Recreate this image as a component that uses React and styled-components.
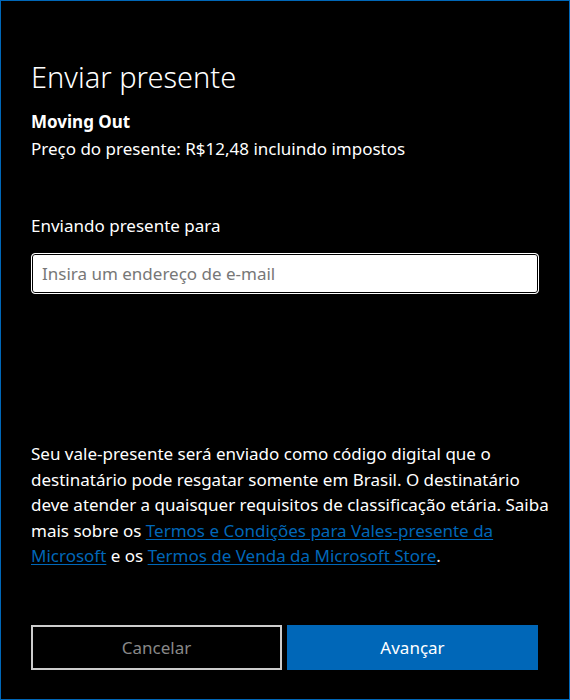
import React, { useState } from "react";
import styled, { createGlobalStyle } from "styled-components";

const GlobalStyle = createGlobalStyle`
  * { box-sizing: border-box; }
  body {
    margin: 0;
    background: #000;
    font-family: "Noto Sans", "Open Sans", sans-serif;
  }
`;

const App = () => {
  const [email, setEmail] = useState("");

  return (
    <StWindow>
      <GlobalStyle />
      <StTitle>Enviar presente</StTitle>

      <StHeader>
        <StProduct>Moving Out</StProduct>
        <StPrice>Preço do presente: R$12,48 incluindo impostos</StPrice>
      </StHeader>

      <StLabel htmlFor="giftEmail">Enviando presente para</StLabel>
      <StInput
        id="giftEmail"
        value={email}
        onChange={(e) => setEmail(e.target.value)}
        placeholder="Insira um endereço de e-mail"
      />

      <StNotice>
        Seu vale-presente será enviado como código digital que o destinatário
        pode resgatar somente em Brasil. O destinatário deve atender a
        quaisquer requisitos de classificação etária. Saiba mais sobre os{" "}
        <StLink href="#">Termos e Condições para Vales-presente da Microsoft</StLink>{" "}
        e os <StLink href="#">Termos de Venda da Microsoft Store</StLink>.
      </StNotice>

      <StActions>
        <StButton>Cancelar</StButton>
        <StButton primary>Avançar</StButton>
      </StActions>
    </StWindow>
  );
};

export default App;

const StWindow = styled.div`
  width: 570px;
  height: 700px;
  border: 1px solid #0067b8;
  background: #000;
  color: #fff;
  display: flex;
  flex-direction: column;
  padding: 58px 31px 29px 30px;
`;

const StTitle = styled.h1`
  margin: 0;
  font-size: 29px;
  font-weight: 300;
  line-height: 36px;
`;

const StHeader = styled.div`
  margin-top: 13px;
  display: flex;
  flex-direction: column;
  font-size: 17px;
  line-height: 27px;
`;

const StProduct = styled.div`
  font-weight: 700;
`;

const StPrice = styled.div`
  font-weight: 400;
`;

const StLabel = styled.label`
  margin-top: 51px;
  font-size: 17px;
  line-height: 26px;
`;

const StInput = styled.input`
  margin-top: 14px;
  width: 508px;
  height: 41px;
  border: 1px solid #fff;
  border-radius: 4px;
  box-shadow: inset 0 0 0 1px #000;
  background: #fff;
  padding: 0 10px;
  font-family: inherit;
  font-size: 17px;
  color: #000;
  outline: none;

  &::placeholder {
    color: #777;
  }
`;

const StNotice = styled.p`
  margin: 147px 0 0;
  width: 528px;
  font-size: 17px;
  line-height: 25.5px;
`;

const StLink = styled.a`
  color: #0067b8;
  text-decoration: underline;
  text-underline-offset: 2px;
`;

const StActions = styled.div`
  margin-top: auto;
  display: grid;
  grid-template-columns: 1fr 1fr;
  gap: 5px;
  height: 45px;
`;

const StButton = styled.button`
  border: ${(p) => (p.primary ? "none" : "2px solid #ccc")};
  background: ${(p) => (p.primary ? "#0067b8" : "transparent")};
  color: ${(p) => (p.primary ? "#fff" : "#888")};
  font-family: inherit;
  font-size: 17px;
  cursor: pointer;
  padding: 0;
`;
